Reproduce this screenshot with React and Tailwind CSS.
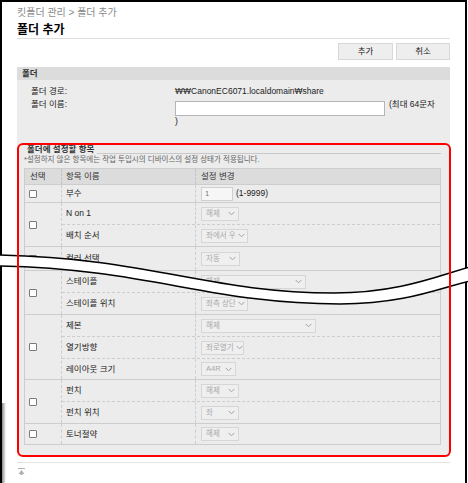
import React from 'react';

const Chevron = () => (
  <svg width="7" height="5" viewBox="0 0 7 5" className="shrink-0">
    <path d="M0.6 0.9 L3.5 3.8 L6.4 0.9" fill="none" stroke="#a0a0a0" strokeWidth="1" />
  </svg>
);

const Checkbox = () => (
  <span className="block h-[8px] w-[8px] rounded-[1px] border border-[#7a7a7a] bg-white" />
);

const Select = ({ label, w }) => (
  <div className={`flex h-[14px] items-center justify-between gap-[2px] whitespace-nowrap border border-[#d6d6d6] bg-[#efefef] pl-[4px] pr-[3px] text-[7.5px] text-[#a9a9a9] ${w}`}>
    <span className="leading-[12px]">{label}</span>
    <Chevron />
  </div>
);

const groups = [
  {
    rows: [
      { name: 'N on 1', sel: '해제', w: 'w-[38px]', h: 'h-[21px]' },
      { name: '배치 순서', sel: '좌에서 우', w: 'w-[47px]', h: 'h-[22px]' },
    ],
  },
  { rows: [{ name: '컬러 선택', sel: '자동', w: 'w-[39px]', h: 'h-[23px]' }] },
  {
    rows: [
      { name: '스테이플', sel: '해제', w: 'w-[105px]', h: 'h-[21px]' },
      { name: '스테이플 위치', sel: '좌측 상단', w: 'w-[47px]', h: 'h-[22px]' },
    ],
  },
  {
    rows: [
      { name: '제본', sel: '해제', w: 'w-[115px]', h: 'h-[21px]' },
      { name: '열기방향', sel: '좌로열기', w: 'w-[43px]', h: 'h-[22px]' },
      { name: '레이아웃 크기', sel: 'A4R', w: 'w-[35px]', h: 'h-[21px]' },
    ],
  },
  {
    rows: [
      { name: '펀치', sel: '해제', w: 'w-[38px]', h: 'h-[21px]' },
      { name: '펀치 위치', sel: '좌', w: 'w-[38px]', h: 'h-[22px]' },
    ],
  },
  { rows: [{ name: '토너절약', sel: '해제', w: 'w-[38px]', h: 'h-[20px]' }] },
];

const Group = ({ rows }) => (
  <div className="flex border-t border-[#cdcdcd]">
    <div className="flex w-[37px] shrink-0 items-center border-r border-dashed border-[#cdcdcd] pl-[4px]">
      <Checkbox />
    </div>
    <div className="flex flex-1 flex-col">
      {rows.map((r, i) => (
        <div
          key={r.name}
          className={`flex items-center ${r.h} ${i > 0 ? 'border-t border-dashed border-[#cdcdcd]' : ''}`}
        >
          <div className="flex h-full w-[134px] shrink-0 items-center border-r border-dashed border-[#cdcdcd] pl-[4px] text-[#222]">
            {r.name}
          </div>
          <div className="pl-[5px]">
            <Select label={r.sel} w={r.w} />
          </div>
        </div>
      ))}
    </div>
  </div>
);

export default function App() {
  return (
    <div className="relative h-[483px] w-[468px] overflow-hidden bg-white font-['Liberation_Sans','Noto_Sans_CJK_KR',sans-serif] text-[8.5px] text-[#222]">
      <div className="h-full w-[467px] border-x-2 border-t-2 border-black px-[15px]">
        {/* breadcrumb + title */}
        <div className="pt-[5px] text-[10px] leading-[12px] text-[#8a8a8a]">킷폴더 관리 &gt; 폴더 추가</div>
        <h1 className="mt-[3px] border-b border-[#dedede] text-[12px] font-bold leading-[16px] text-black">폴더 추가</h1>

        <div className="mt-[4px] flex justify-end gap-[3px]">
          <button className="h-[17px] w-[55px] border border-[#d8d8d8] bg-[#eeeeee] text-[8.5px] text-[#222]">추가</button>
          <button className="h-[17px] w-[54px] border border-[#d8d8d8] bg-[#eeeeee] text-[8.5px] text-[#222]">취소</button>
        </div>

        {/* folder section */}
        <div className="mt-[7px] h-[13px] bg-[#dcdcdc] pl-[5px] font-bold leading-[13px] text-[#333]">폴더</div>
        <div className="bg-[#ececec] pb-[11px] pt-[4px]">
          <div className="flex h-[14px] items-center">
            <div className="w-[158px] shrink-0 pl-[14px]">폴더 경로:</div>
            <div>₩₩CanonEC6071.localdomain₩share</div>
          </div>
          <div className="flex items-start">
            <div className="w-[158px] shrink-0 pl-[14px] leading-[12px]">폴더 이름:</div>
            <div>
              <div className="flex items-start">
                <div className="mt-[3px] h-[15px] w-[210px] border border-[#b5b5b5] bg-white" />
                <span className="ml-[4px] leading-[12px]">(최대 64문자</span>
              </div>
              <div className="mt-[-1px] leading-[12px]">)</div>
            </div>
          </div>

          {/* items to set */}
          <div className="ml-[7px] mr-[9px] mt-[17px]">
            <div className="flex h-[10px] items-start">
              <span className="px-[3px] font-bold leading-[10px] text-[#333]">폴더에 설정할 항목</span>
              <div className="mt-[9px] flex-1 border-t border-[#c8c8c8]" />
            </div>
            <div className="mt-[1px] text-[7.5px] leading-[10px] text-[#666]">
              *설정하지 않은 항목에는 작업 투입시의 디바이스의 설정 상태가 적용됩니다.
            </div>

            <div className="mt-[3px] border border-[#cdcdcd]">
              <div className="flex h-[15px] items-center bg-[#dcdcdc] text-[#333]">
                <div className="flex h-full w-[37px] items-center border-r border-dashed border-[#c4c4c4] pl-[5px]">선택</div>
                <div className="flex h-full w-[134px] items-center border-r border-dashed border-[#c4c4c4] pl-[4px]">항목 이름</div>
                <div className="pl-[5px]">설정 변경</div>
              </div>
              <div className="flex h-[18px] border-t border-[#cdcdcd]">
                <div className="flex w-[37px] items-center border-r border-dashed border-[#cdcdcd] pl-[4px]">
                  <Checkbox />
                </div>
                <div className="flex w-[134px] items-center border-r border-dashed border-[#cdcdcd] pl-[4px]">부수</div>
                <div className="flex items-center pl-[5px]">
                  <div className="flex h-[14px] w-[32px] items-center border border-[#cfcfcf] bg-[#f6f6f6] pl-[3px] text-[7.5px] leading-[12px] text-[#777]">1</div>
                  <span className="ml-[3px]">(1-9999)</span>
                </div>
              </div>
              {groups.map((g, i) => (
                <Group key={i} rows={g.rows} />
              ))}
            </div>
          </div>
        </div>

        <div className="mt-[6px] border-t border-[#e3e3e3]" />
        <div className="mt-[5px] pl-[1px]">
          <svg width="7" height="7" viewBox="0 0 7 7">
            <path d="M0 0.5 H7" stroke="#b0b0b0" strokeWidth="1" />
            <path d="M3.5 2 L6.5 6 H4.5 V7 H2.5 V6 H0.5 Z" fill="#b0b0b0" />
          </svg>
        </div>
      </div>

      {/* torn-page cut */}
      <svg className="pointer-events-none absolute left-0 top-0" width="468" height="483" viewBox="0 0 468 483">
        <path
          d="M-2 255 C150 258, 210 293, 334 293 C400 293, 440 275, 470 267 L470 281 C440 288, 405 304, 340 304 C210 304, 150 269, -2 266 Z"
          fill="#fff"
        />
        <path d="M-2 255 C150 258, 210 293, 334 293 C400 293, 440 275, 470 267" fill="none" stroke="#000" strokeWidth="1.5" />
        <path d="M-2 266 C150 269, 210 304, 340 304 C405 304, 440 288, 470 281" fill="none" stroke="#000" strokeWidth="1.5" />
      </svg>
      <div className="pointer-events-none absolute bottom-0 left-0 h-[80px] w-[6px] bg-linear-to-r from-black/70 to-transparent" />

      {/* highlight box */}
      <div className="pointer-events-none absolute left-[17px] top-[143px] h-[314px] w-[434px] rounded-[6px] border-2 border-[#ff0000]" />
    </div>
  );
}
